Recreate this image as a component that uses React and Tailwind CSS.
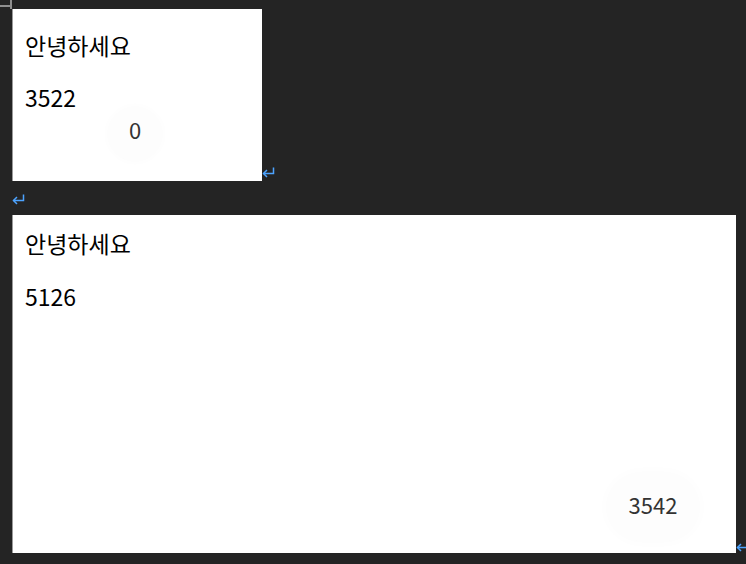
export default function App() {
  const font = { fontFamily: '"Noto Sans CJK KR", "Noto Sans", sans-serif' };

  const Ret = ({ className }) => (
    <svg width="13" height="11" viewBox="0 0 13 11" fill="none" stroke="#4da3ff" strokeWidth="1.5" className={className}>
      <path d="M11.5 0.5 V6.5 H1.5" />
      <path d="M5 3 L1.5 6.5 L5 10" />
    </svg>
  );

  return (
    <div className="w-[746px] h-[564px] overflow-hidden bg-[#242424] whitespace-nowrap" style={font}>
      {/* corner of the element above */}
      <div className="w-[12px] h-[9px] border-r-2 border-[#8f8f8f]">
        <div className="h-[7px] border-b-2 border-[#8f8f8f]" />
      </div>

      <div className="flex items-end pl-[12px]">
        <div className="relative w-[250px] h-[172px] shrink-0 bg-white border-l border-[#9a9a9a] px-[12px] text-black text-[23px] leading-[31px]">
          <p className="mt-[21px]">안녕하세요</p>
          <p className="mt-[21px]">3522</p>
          <div className="absolute left-[95px] top-[98px] w-[54px] h-[54px] rounded-full bg-[#fdfdfd] shadow-[0_0_10px_rgba(0,0,0,0.02)] flex items-center justify-center text-[#333] text-[22px] leading-none pb-[10px]">
            0
          </div>
        </div>
        <Ret className="shrink-0 mb-[3px]" />
      </div>

      <div className="h-[34px] pl-[12px] pt-[13px]">
        <Ret />
      </div>

      <div className="flex items-end pl-[12px]">
        <div className="relative w-[724px] h-[338px] shrink-0 bg-white border-l border-[#9a9a9a] px-[12px] text-black text-[23px] leading-[31px]">
          <p className="mt-[13px]">안녕하세요</p>
          <p className="mt-[22px]">5126</p>
          <div className="absolute left-[594px] top-[258px] w-[92px] h-[68px] rounded-full bg-[#fdfdfd] shadow-[0_0_14px_rgba(0,0,0,0.02)] flex items-center justify-center text-[#333] text-[22px] leading-none pb-[6px]">
            3542
          </div>
        </div>
        <Ret className="shrink-0 mb-[1px]" />
      </div>
    </div>
  );
}
